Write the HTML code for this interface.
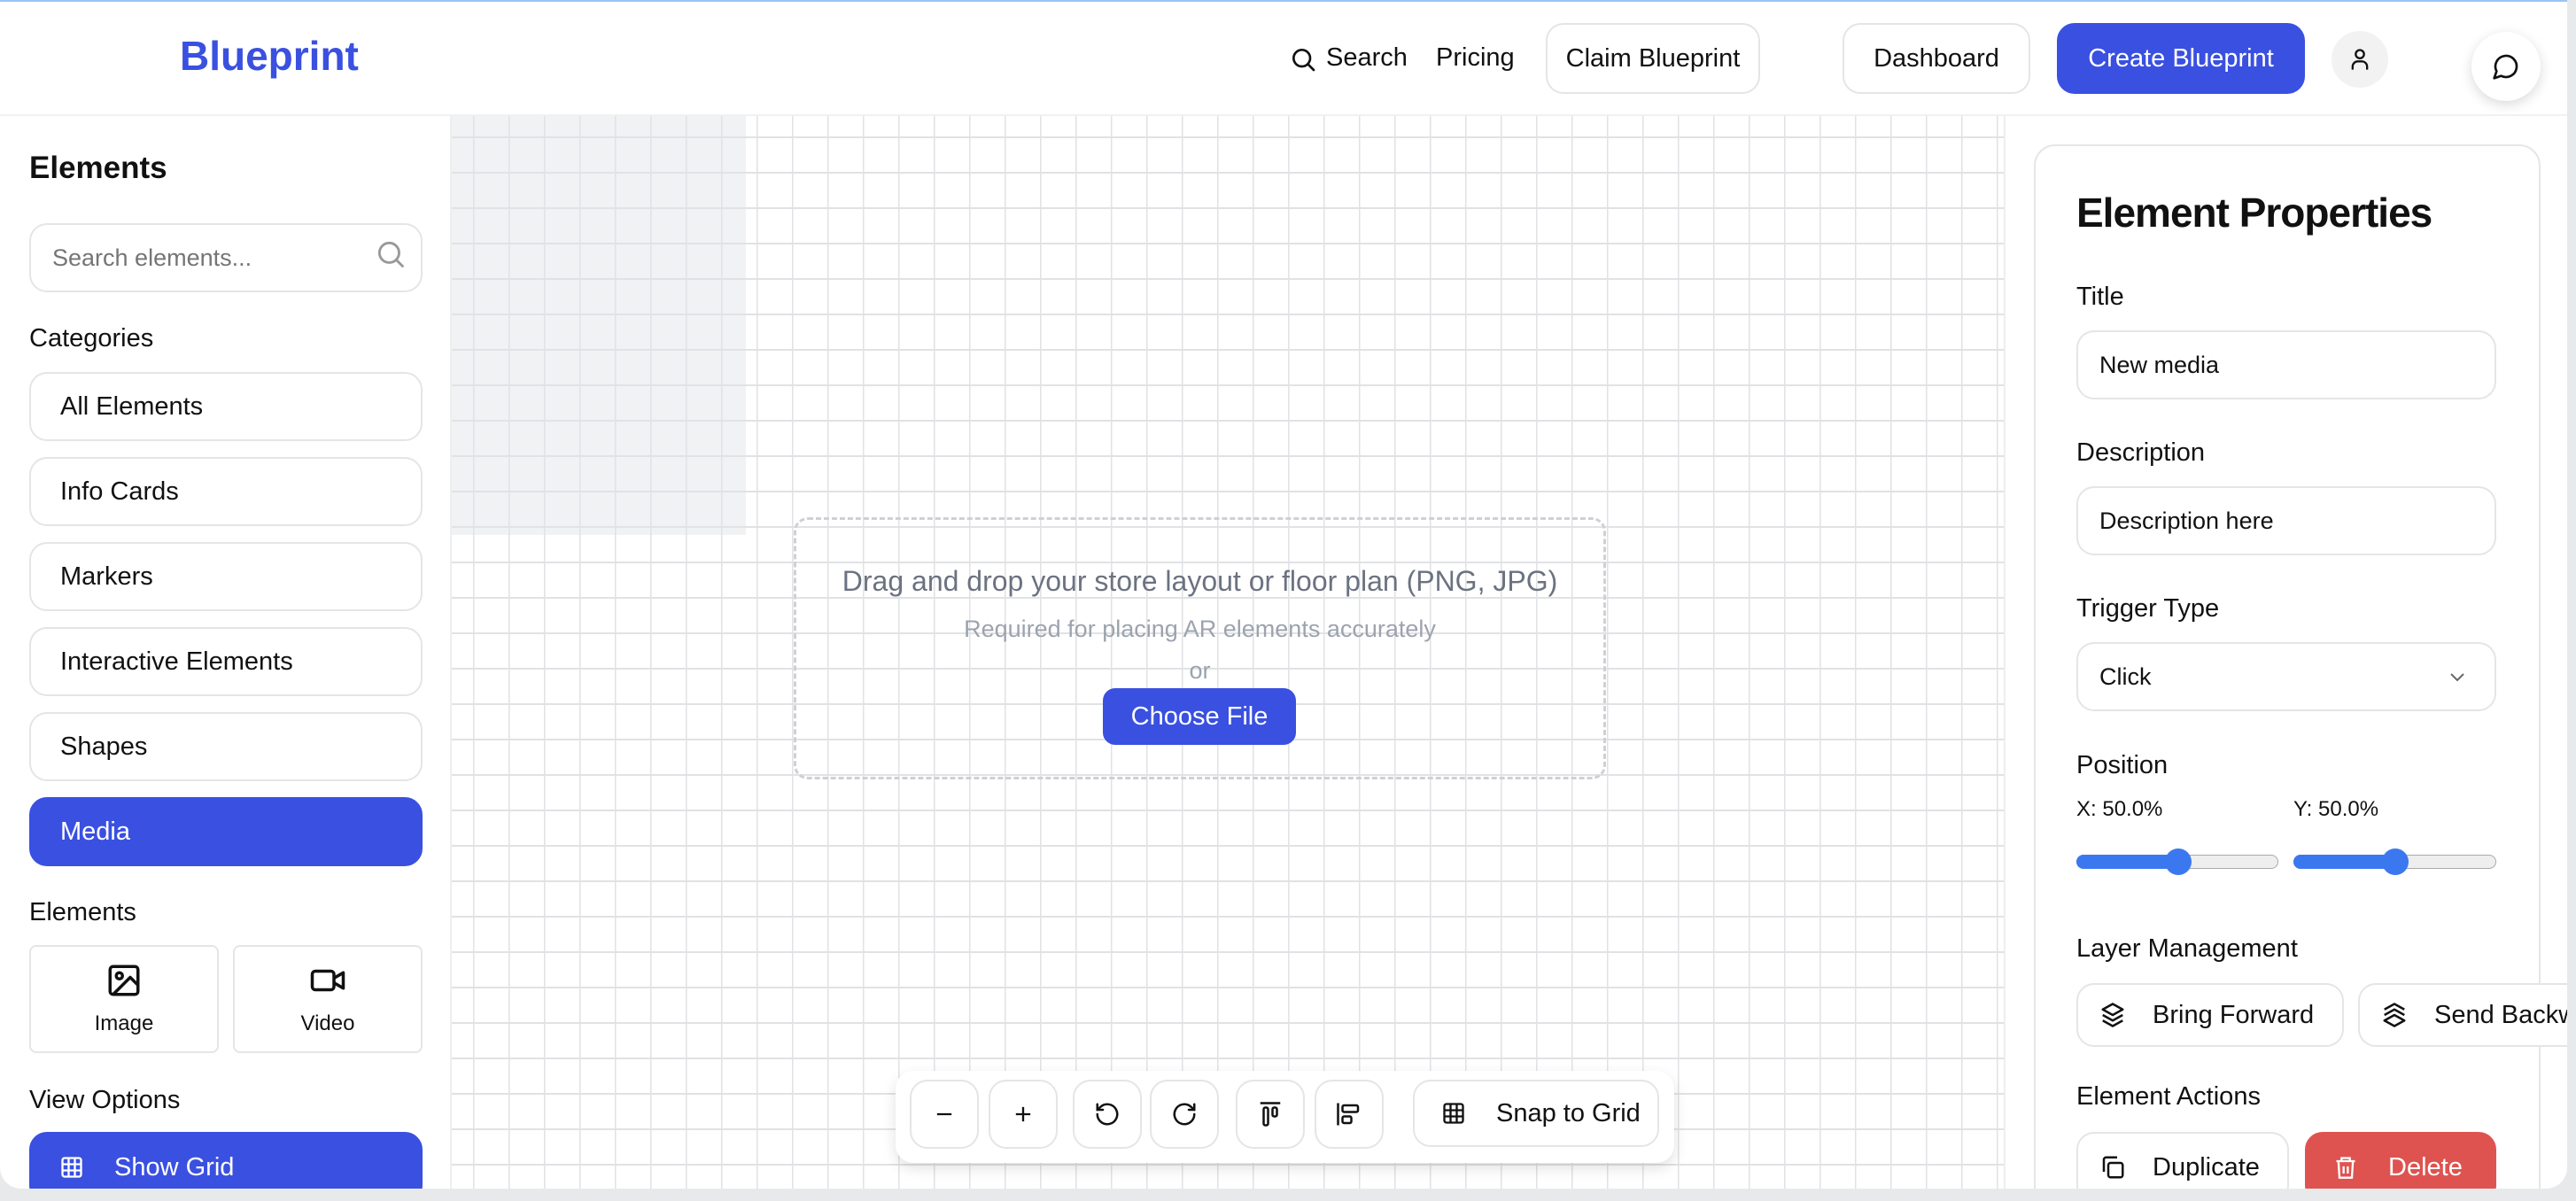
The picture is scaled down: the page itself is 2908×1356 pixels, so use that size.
<!DOCTYPE html>
<html><head><meta charset="utf-8">
<style>
*{box-sizing:border-box;margin:0;padding:0}
body{width:2908px;height:1356px;overflow:hidden;background:#e8e9eb;font-family:"Liberation Sans",sans-serif;color:#111;position:relative}
.win{position:absolute;left:0;top:0;width:2898px;height:1342px;background:#fff;border-bottom-left-radius:24px;border-bottom-right-radius:24px;overflow:hidden;border-top:2px solid #9cc3f5}
.a{position:absolute}
.btn{position:absolute;border:2px solid #e5e5e5;border-radius:20px;background:#fff;display:flex;align-items:center;font-size:29px;color:#111}
.blue{background:#3a50e0;border-color:#3a50e0;color:#fff}
.lbl{position:absolute;font-size:29px;color:#111}
.grid{position:absolute;left:510px;top:129px;width:1752px;height:1220px;
background-color:#fff;
background-image:linear-gradient(#e1e2e5 2px,transparent 2px),linear-gradient(90deg,#e1e2e5 1.5px,transparent 1.5px);
background-size:40px 40px;background-position:0 23px,24px 0}
svg{display:block}
</style></head><body>
<div class="win">
<!-- header -->
<div class="a" style="left:203px;top:34px;font-size:46px;font-weight:700;color:#3a50e0">Blueprint</div>
<svg class="a" style="left:1455px;top:49px" width="32" height="32" viewBox="0 0 24 24" fill="none" stroke="#111" stroke-width="2" stroke-linecap="round"><circle cx="11" cy="11" r="7"/><path d="M16 16l5 5"/></svg>
<div class="lbl" style="left:1497px;top:47px">Search</div>
<div class="lbl" style="left:1621px;top:47px">Pricing</div>
<div class="btn" style="left:1745px;top:24px;width:242px;height:80px;justify-content:center">Claim Blueprint</div>
<div class="btn" style="left:2080px;top:24px;width:212px;height:80px;justify-content:center">Dashboard</div>
<div class="btn blue" style="left:2322px;top:24px;width:280px;height:80px;justify-content:center">Create Blueprint</div>
<div class="a" style="left:2632px;top:33px;width:64px;height:64px;border-radius:50%;background:#f2f2f2"></div>
<svg class="a" style="left:2650px;top:50px" width="28" height="30" viewBox="0 0 24 24" fill="none" stroke="#111" stroke-width="2"><circle cx="12" cy="7" r="4"/><path d="M5 22v-3a5 5 0 0 1 5-5h4a5 5 0 0 1 5 5v3"/></svg>
<div class="a" style="left:2790px;top:34px;width:78px;height:78px;border-radius:50%;background:#fff;box-shadow:0 4px 14px rgba(0,0,0,.15)"></div>
<svg class="a" style="left:2813px;top:57px" width="32" height="32" viewBox="0 0 24 24" fill="none" stroke="#111" stroke-width="2" stroke-linejoin="round"><path d="M7.9 20A9 9 0 1 0 4 16.1L2 22z"/></svg>
<div class="a" style="left:0;top:127px;width:2898px;height:2px;background:#f1f1f1"></div>

<!-- sidebar -->
<div class="a" style="left:508px;top:129px;width:2px;height:1220px;background:#eee"></div>
<div class="a" style="left:33px;top:168px;font-size:35px;font-weight:600">Elements</div>
<div class="btn" style="left:33px;top:250px;width:444px;height:78px;padding-left:24px;color:#757575;font-size:27px">Search elements...</div>
<svg class="a" style="left:422px;top:266px" width="38" height="38" viewBox="0 0 24 24" fill="none" stroke="#999" stroke-width="1.8" stroke-linecap="round"><circle cx="11" cy="11" r="7"/><path d="M16 16l4.5 4.5"/></svg>
<div class="lbl" style="left:33px;top:364px">Categories</div>
<div class="btn" style="left:33px;top:418px;width:444px;height:78px;padding-left:33px">All Elements</div>
<div class="btn" style="left:33px;top:514px;width:444px;height:78px;padding-left:33px">Info Cards</div>
<div class="btn" style="left:33px;top:610px;width:444px;height:78px;padding-left:33px">Markers</div>
<div class="btn" style="left:33px;top:706px;width:444px;height:78px;padding-left:33px">Interactive Elements</div>
<div class="btn" style="left:33px;top:802px;width:444px;height:78px;padding-left:33px">Shapes</div>
<div class="btn blue" style="left:33px;top:898px;width:444px;height:78px;padding-left:33px">Media</div>
<div class="lbl" style="left:33px;top:1012px">Elements</div>
<div class="btn" style="left:33px;top:1065px;width:214px;height:122px;border-radius:8px;flex-direction:column;justify-content:center;font-size:24px;gap:14px">
<svg width="42" height="42" viewBox="0 0 24 24" fill="none" stroke="#111" stroke-width="2" stroke-linejoin="round"><rect x="3" y="3" width="18" height="18" rx="2"/><circle cx="9" cy="9" r="2"/><path d="M21 15l-5-5L5 21"/></svg>Image</div>
<div class="btn" style="left:263px;top:1065px;width:214px;height:122px;border-radius:8px;flex-direction:column;justify-content:center;font-size:24px;gap:14px">
<svg width="46" height="42" viewBox="0 0 24 24" fill="none" stroke="#111" stroke-width="2" stroke-linejoin="round"><rect x="2" y="6" width="14" height="12" rx="2"/><path d="M16 10.5l6-3.5v10l-6-3.5"/></svg>Video</div>
<div class="lbl" style="left:33px;top:1224px">View Options</div>
<div class="btn blue" style="left:33px;top:1276px;width:444px;height:80px;padding-left:32px;gap:34px">
<svg width="28" height="28" viewBox="0 0 24 24" fill="none" stroke="#fff" stroke-width="2"><rect x="3" y="3" width="18" height="18" rx="2"/><path d="M3 9h18M3 15h18M9 3v18M15 3v18"/></svg>Show Grid</div>

<!-- canvas -->
<div class="grid"></div>
<div class="a" style="left:510px;top:129px;width:332px;height:473px;background:rgba(225,227,231,.45)"></div>
<div class="a" style="left:896px;top:582px;width:917px;height:296px;border:3px dashed #cfd0d4;border-radius:16px"></div>
<div class="a" style="left:896px;top:636px;width:917px;text-align:center;font-size:32px;color:#6b7280">Drag and drop your store layout or floor plan (PNG, JPG)</div>
<div class="a" style="left:896px;top:693px;width:917px;text-align:center;font-size:27px;color:#9ca3af">Required for placing AR elements accurately</div>
<div class="a" style="left:896px;top:740px;width:917px;text-align:center;font-size:27px;color:#9ca3af">or</div>
<div class="btn blue" style="left:1245px;top:775px;width:218px;height:64px;justify-content:center;border-radius:14px">Choose File</div>

<!-- toolbar -->
<div class="a" style="left:1011px;top:1207px;width:879px;height:104px;background:#fff;border-radius:20px;box-shadow:0 6px 16px rgba(0,0,0,.12)"></div>
<div class="btn" style="left:1027px;top:1217px;width:78px;height:78px;justify-content:center"><svg width="28" height="28" viewBox="0 0 24 24" stroke="#111" stroke-width="2"><path d="M5 12h14"/></svg></div>
<div class="btn" style="left:1116px;top:1217px;width:78px;height:78px;justify-content:center"><svg width="28" height="28" viewBox="0 0 24 24" stroke="#111" stroke-width="2"><path d="M5 12h14M12 5v14"/></svg></div>
<div class="btn" style="left:1211px;top:1217px;width:78px;height:78px;justify-content:center"><svg width="30" height="30" viewBox="0 0 24 24" fill="none" stroke="#111" stroke-width="2" stroke-linecap="round"><path d="M3 12a9 9 0 1 0 3-6.7L3 8"/><path d="M3 3v5h5"/></svg></div>
<div class="btn" style="left:1298px;top:1217px;width:78px;height:78px;justify-content:center"><svg width="30" height="30" viewBox="0 0 24 24" fill="none" stroke="#111" stroke-width="2" stroke-linecap="round"><path d="M21 12a9 9 0 1 1-3-6.7L21 8"/><path d="M21 3v5h-5"/></svg></div>
<div class="btn" style="left:1395px;top:1217px;width:78px;height:78px;justify-content:center"><svg width="30" height="30" viewBox="0 0 24 24" fill="none" stroke="#111" stroke-width="2"><path d="M3 2h18"/><rect x="6" y="6" width="4" height="16" rx="1.5"/><rect x="14" y="6" width="4" height="8" rx="1.5"/></svg></div>
<div class="btn" style="left:1484px;top:1217px;width:78px;height:78px;justify-content:center"><svg width="30" height="30" viewBox="0 0 24 24" fill="none" stroke="#111" stroke-width="2"><path d="M2 2v20"/><rect x="6" y="4" width="14" height="6" rx="1.5"/><rect x="6" y="14" width="8" height="6" rx="1.5"/></svg></div>
<div class="btn" style="left:1595px;top:1217px;width:278px;height:76px;padding-left:30px;gap:34px"><svg width="28" height="28" viewBox="0 0 24 24" fill="none" stroke="#111" stroke-width="2"><rect x="3" y="3" width="18" height="18" rx="2"/><path d="M3 9h18M3 15h18M9 3v18M15 3v18"/></svg>Snap to Grid</div>

<!-- right panel -->
<div class="a" style="left:2262px;top:129px;width:636px;height:1220px;background:#fff;border-left:2px solid #eee"></div>
<div class="a" style="left:2296px;top:161px;width:572px;height:1240px;border:2px solid #e6e6e6;border-radius:24px;background:#fff"></div>
<div class="a" style="left:2344px;top:211px;font-size:46px;font-weight:700;letter-spacing:-1px">Element Properties</div>
<div class="lbl" style="left:2344px;top:317px">Title</div>
<div class="btn" style="left:2344px;top:371px;width:474px;height:78px;padding-left:24px;font-size:27px">New media</div>
<div class="lbl" style="left:2344px;top:493px">Description</div>
<div class="btn" style="left:2344px;top:547px;width:474px;height:78px;padding-left:24px;font-size:27px">Description here</div>
<div class="lbl" style="left:2344px;top:669px">Trigger Type</div>
<div class="btn" style="left:2344px;top:723px;width:474px;height:78px;padding-left:24px;font-size:27px">Click</div>
<svg class="a" style="left:2762px;top:750px" width="24" height="24" viewBox="0 0 24 24" fill="none" stroke="#666" stroke-width="2"><path d="M5 9l7 7 7-7"/></svg>
<div class="lbl" style="left:2344px;top:846px">Position</div>
<div class="a" style="left:2344px;top:898px;font-size:24px">X: 50.0%</div>
<div class="a" style="left:2589px;top:898px;font-size:24px">Y: 50.0%</div>
<div class="a" style="left:2344px;top:963px;width:228px;height:16px;border-radius:8px;background:#eee;border:1.5px solid #aaa"></div>
<div class="a" style="left:2344px;top:963px;width:115px;height:16px;border-radius:8px;background:#3b78f0"></div>
<div class="a" style="left:2444px;top:956px;width:30px;height:30px;border-radius:50%;background:#3b78f0"></div>
<div class="a" style="left:2589px;top:963px;width:229px;height:16px;border-radius:8px;background:#eee;border:1.5px solid #aaa"></div>
<div class="a" style="left:2589px;top:963px;width:115px;height:16px;border-radius:8px;background:#3b78f0"></div>
<div class="a" style="left:2689px;top:956px;width:30px;height:30px;border-radius:50%;background:#3b78f0"></div>
<div class="lbl" style="left:2344px;top:1053px">Layer Management</div>
<div class="btn" style="left:2344px;top:1108px;width:302px;height:72px;padding-left:24px;gap:30px"><svg width="30" height="30" viewBox="0 0 24 24" fill="none" stroke="#111" stroke-width="2" stroke-linejoin="round"><path d="M12 2l9 5-9 5-9-5z"/><path d="M3 12l9 5 9-5M3 17l9 5 9-5"/></svg>Bring Forward</div>
<div class="btn" style="left:2662px;top:1108px;width:300px;height:72px;padding-left:24px;gap:30px"><svg width="30" height="30" viewBox="0 0 24 24" fill="none" stroke="#111" stroke-width="2" stroke-linejoin="round"><path d="M3 7l9-5 9 5M3 12l9-5 9 5"/><path d="M12 12l9 5-9 5-9-5z"/></svg>Send Backward</div>
<div class="a" style="left:2898px;top:0;width:10px;height:1356px;background:#e8e9eb"></div>
<div class="lbl" style="left:2344px;top:1220px">Element Actions</div>
<div class="btn" style="left:2344px;top:1276px;width:240px;height:80px;padding-left:24px;gap:30px"><svg width="30" height="30" viewBox="0 0 24 24" fill="none" stroke="#111" stroke-width="2"><rect x="8" y="8" width="13" height="13" rx="2"/><path d="M4 16V5a2 2 0 0 1 2-2h10"/></svg>Duplicate</div>
<div class="btn" style="left:2602px;top:1276px;width:216px;height:80px;padding-left:30px;gap:34px;background:#de5350;border-color:#de5350;color:#fff"><svg width="28" height="30" viewBox="0 0 24 24" fill="none" stroke="#fff" stroke-width="2"><path d="M3 6h18M8 6V3h8v3M5 6l1 16h12l1-16M10 11v7M14 11v7"/></svg>Delete</div>
</div>
</body></html>
